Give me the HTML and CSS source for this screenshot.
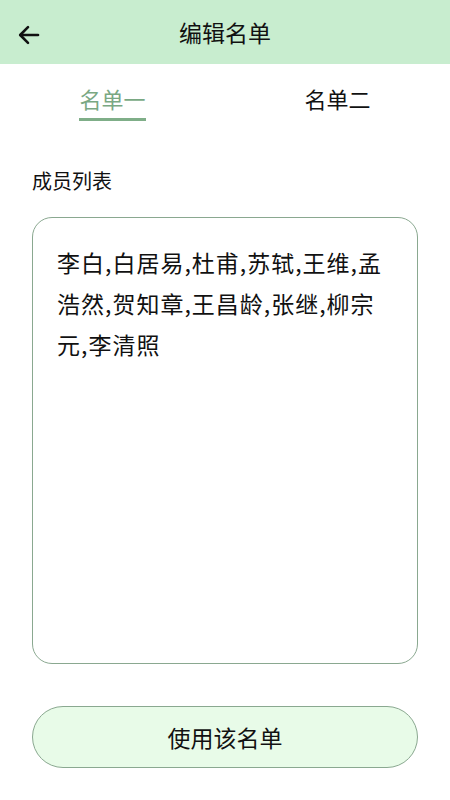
FILE: index.html
```html
<!DOCTYPE html>
<html lang="zh-CN">
<head>
    <meta charset="UTF-8">
    <meta name="viewport" content="width=device-width, initial-scale=1.0">
    <title>编辑名单</title>
    <link rel="stylesheet" href="styles.css">
</head>
<body>

<div class="top-bar">
    <a class="back" href="#">
        <svg width="24" height="24" viewBox="0 0 24 24" fill="none" stroke="#111" stroke-width="2.6" stroke-linecap="round" stroke-linejoin="round">
            <path d="M21 12H3.5"></path>
            <path d="M11 4.2L3.2 12l7.8 7.8"></path>
        </svg>
    </a>
    <h1>编辑名单</h1>
    <span></span>
</div>

<div class="tabs">
    <div class="tab active"><span>名单一</span></div>
    <div class="tab"><span>名单二</span></div>
</div>

<div class="content">
    <label for="members">成员列表</label>
    <textarea id="members" class="members">李白,白居易,杜甫,苏轼,王维,孟浩然,贺知章,王昌龄,张继,柳宗元,李清照</textarea>

    <button type="button">使用该名单</button>
</div>

</body>
</html>
```

FILE: styles.css
```css
body {
    margin: 0;
    font-family: "Noto Sans CJK SC", sans-serif;
    color: #111;
    background-color: white;
}

.top-bar {
    display: grid;
    grid-template-columns: 64px 1fr 64px;
    align-items: center;
    height: 64px;
    background-color: #c8edcf;
}

.back {
    display: flex;
    padding-left: 17px;
    padding-top: 5px;
}

.top-bar h1 {
    margin: 0;
    text-align: center;
    font-size: 23px;
    font-weight: normal;
    line-height: 30px;
}

.tabs {
    display: flex;
    padding-top: 19px;
}

.tab {
    flex: 1;
    text-align: center;
    font-size: 22px;
    line-height: 30px;
}

.tab span {
    display: inline-block;
    padding-bottom: 5px;
    border-bottom: 3px solid transparent;
}

.tab.active span {
    color: #7aa883;
    border-bottom-color: #7fae88;
}

.content {
    padding: 0 32px;
}

label {
    display: block;
    margin-top: 47px;
    font-size: 20px;
    line-height: 26px;
}

textarea.members {
    display: block;
    box-sizing: border-box;
    width: 100%;
    height: 447px;
    margin-top: 23px;
    padding: 24px 30px 0 24px;
    border: 1px solid #8aa890;
    border-radius: 20px;
    font-family: "Noto Sans CJK SC", sans-serif;
    font-size: 23px;
    line-height: 41px;
    letter-spacing: 1px;
    color: #111;
    resize: none;
    outline: none;
}

button {
    display: block;
    box-sizing: border-box;
    width: 100%;
    height: 62px;
    margin-top: 42px;
    background-color: #e8fbe8;
    border: 1px solid #8aa890;
    border-radius: 31px;
    font-family: "Noto Sans CJK SC", sans-serif;
    font-size: 23px;
    color: #111;
    cursor: pointer;
}
```
